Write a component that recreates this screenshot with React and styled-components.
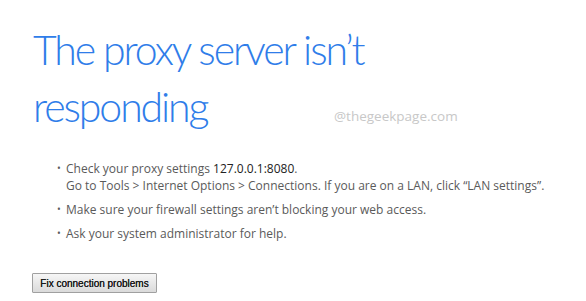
import React from "react"
import styled, { createGlobalStyle } from "styled-components"

const GlobalStyle = createGlobalStyle`
  html, body {
    margin: 0;
    padding: 0;
    background: #fff;
  }
  body {
    width: 586px;
    height: 301px;
    overflow: hidden;
  }
`

const Page = styled.div`
  position: relative;
  width: 586px;
  height: 301px;
  box-sizing: border-box;
  padding: 21px 0 0 33px;
  font-family: "Open Sans", "Segoe UI", sans-serif;
`

const Title = styled.h1`
  margin: 0;
  font-family: "Lato", "Segoe UI", sans-serif;
  font-weight: 300;
  font-size: 41px;
  line-height: 57px;
  color: #2f7de9;
  letter-spacing: -2.1px;
  white-space: nowrap;
  width: 300px;
`

const Watermark = styled.div`
  position: absolute;
  left: 334px;
  top: 107px;
  font-size: 13.5px;
  color: #c8c8c8;
`

const List = styled.ul`
  margin: 25px 0 0;
  padding: 0 0 0 33px;
  list-style: none;
`

const Item = styled.li`
  position: relative;
  font-size: 12px;
  line-height: 17px;
  color: #5a5a5a;
  margin-bottom: 7px;

  &::before {
    content: "•";
    position: absolute;
    left: -9px;
    top: 0;
    font-size: 10px;
  }
`

const Strong = styled.span`
  color: #222;
`

const FixButton = styled.button`
  display: block;
  margin-top: 31px;
  margin-left: -1px;
  height: 20px;
  width: 125px;
  padding: 0;
  border: 1px solid #a0a0a0;
  border-radius: 1px;
  background: linear-gradient(#f6f6f6, #dadada);
  font-family: "Liberation Sans", Arial, sans-serif;
  font-size: 10px;
  color: #1a1a1a;
  text-shadow: 0 0 0.4px #1a1a1a;
`

const App = () => (
  <>
    <GlobalStyle />
    <Page>
      <Title>
        The proxy server isn’t
        <br />
        responding
      </Title>
      <Watermark>@thegeekpage.com</Watermark>
      <List>
        <Item>
          Check your proxy settings <Strong>127.0.0.1:8080</Strong>.
          <br />
          Go to Tools &gt; Internet Options &gt; Connections. If you are on a LAN, click “LAN settings”.
        </Item>
        <Item>Make sure your firewall settings aren’t blocking your web access.</Item>
        <Item>Ask your system administrator for help.</Item>
      </List>
      <FixButton>Fix connection problems</FixButton>
    </Page>
  </>
)

export default App
